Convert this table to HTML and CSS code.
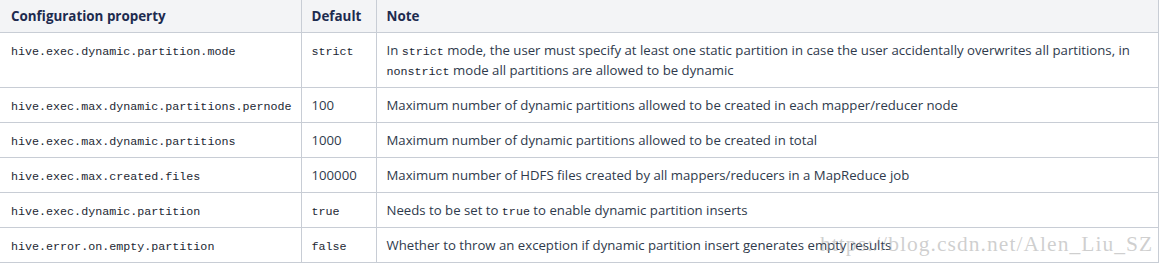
FILE: index.html
```html
<!DOCTYPE html>
<html>
<head>
<meta charset="utf-8">
<link rel="stylesheet" href="styles.css">
</head>
<body>
<div class="wrap">
<table class="cfg">
  <colgroup><col class="c1"><col class="c2"><col class="c3"></colgroup>
  <thead>
    <tr><th>Configuration property</th><th>Default</th><th>Note</th></tr>
  </thead>
  <tbody>
    <tr><td><code>hive.exec.dynamic.partition.mode</code></td><td><code>strict</code></td><td>In <code>strict</code> mode, the user must specify at least one static partition in case the user accidentally overwrites all partitions, in <code>nonstrict</code> mode all partitions are allowed to be dynamic</td></tr>
    <tr><td><code>hive.exec.max.dynamic.partitions.pernode</code></td><td>100</td><td>Maximum number of dynamic partitions allowed to be created in each mapper/reducer node</td></tr>
    <tr><td><code>hive.exec.max.dynamic.partitions</code></td><td>1000</td><td>Maximum number of dynamic partitions allowed to be created in total</td></tr>
    <tr><td><code>hive.exec.max.created.files</code></td><td>100000</td><td>Maximum number of HDFS files created by all mappers/reducers in a MapReduce job</td></tr>
    <tr><td><code>hive.exec.dynamic.partition</code></td><td><code>true</code></td><td>Needs to be set to <code>true</code> to enable dynamic partition inserts</td></tr>
    <tr><td><code>hive.error.on.empty.partition</code></td><td><code>false</code></td><td>Whether to throw an exception if dynamic partition insert generates empty results</td></tr>
  </tbody>
</table>
<div class="watermark">https://blog.csdn.net/Alen_Liu_SZ</div>
</div>
</body>
</html>
```

FILE: styles.css
```css
html, body {
  margin: 0;
  padding: 0;
  background: #ffffff;
}
.wrap {
  position: relative;
  width: 1158px;
}
.cfg {
  border-collapse: collapse;
  width: 1158px;
  table-layout: fixed;
  font-family: "Open Sans", "Noto Sans", sans-serif;
  font-size: 13.2px;
  color: #2f3a4c;
}
.c1 { width: 301px; }
.c2 { width: 75px; }
.c3 { width: 782px; }
.cfg th, .cfg td {
  border: 1px solid #c8cdd5;
  text-align: left;
  vertical-align: top;
  padding: 7px 10px 7px 10px;
  line-height: 20px;
}
.cfg th:first-child, .cfg td:first-child {
  border-left: none;
  padding-left: 11px;
}
.cfg thead th {
  border-top: none;
  background: #f3f4f6;
  font-weight: 700;
  font-size: 13.4px;
  color: #1d2b4f;
  height: 18px;
  line-height: 18px;
  padding-top: 7px;
  padding-bottom: 7px;
}
.cfg td {
  height: 20px;
}
code {
  font-family: "Liberation Mono", "DejaVu Sans Mono", monospace;
  font-size: 11.7px;
  line-height: 1;
  color: #1c2733;
}
.watermark {
  position: absolute;
  left: 820px;
  top: 232px;
  font-family: "Liberation Serif", "DejaVu Serif", serif;
  font-size: 21.5px;
  letter-spacing: 1.05px;
  color: rgba(160, 160, 160, 0.5);
  white-space: nowrap;
  pointer-events: none;
}
```
